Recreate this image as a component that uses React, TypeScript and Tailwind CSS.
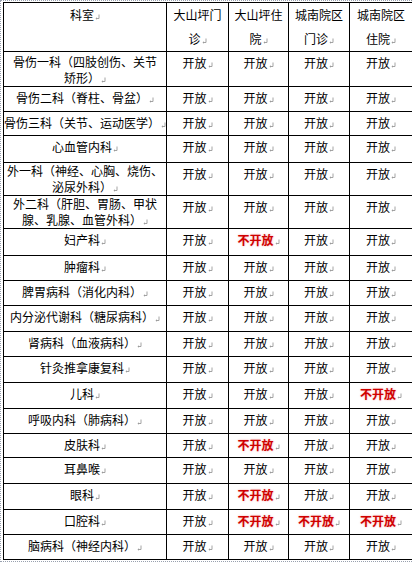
/**
 * App.tsx — 科室开放情况表
 */

type Row = { label: string[]; h: string; open: boolean[]; pad?: string };

const rows: Row[] = [
  { label: ["骨伤一科（四肢创伤、关节", "矫形）"], h: "h-[35px]", pad: "pt-[2px]", open: [true, true, true, true] },
  { label: ["骨伤二科（脊柱、骨盆）"], h: "h-[25px]", open: [true, true, true, true] },
  { label: ["骨伤三科（关节、运动医学）"], h: "h-[24px]", open: [true, true, true, true] },
  { label: ["心血管内科"], h: "h-[27px]", open: [true, true, true, true] },
  { label: ["外一科（神经、心胸、烧伤、", "泌尿外科）"], h: "h-[33px]", pad: "pt-0", open: [true, true, true, true] },
  { label: ["外二科（肝胆、胃肠、甲状", "腺、乳腺、血管外科）"], h: "h-[33px]", pad: "pt-0", open: [true, true, true, true] },
  { label: ["妇产科"], h: "h-[27px]", open: [true, false, true, true] },
  { label: ["肿瘤科"], h: "h-[25px]", open: [true, true, true, true] },
  { label: ["脾胃病科（消化内科）"], h: "h-[25px]", open: [true, true, true, true] },
  { label: ["内分泌代谢科（糖尿病科）"], h: "h-[26px]", open: [true, true, true, true] },
  { label: ["肾病科（血液病科）"], h: "h-[25px]", open: [true, true, true, true] },
  { label: ["针灸推拿康复科"], h: "h-[26px]", open: [true, true, true, true] },
  { label: ["儿科"], h: "h-[26px]", open: [true, true, true, false] },
  { label: ["呼吸内科（肺病科）"], h: "h-[25px]", open: [true, true, true, true] },
  { label: ["皮肤科"], h: "h-[24px]", open: [true, false, true, true] },
  { label: ["耳鼻喉"], h: "h-[26px]", open: [true, true, true, true] },
  { label: ["眼科"], h: "h-[26px]", open: [true, false, true, true] },
  { label: ["口腔科"], h: "h-[25px]", open: [true, false, false, false] },
  { label: ["脑病科（神经内科）"], h: "h-[25px]", open: [true, true, true, true] },
];

const heads = [
  ["大山坪门", "诊"],
  ["大山坪住", "院"],
  ["城南院区", "门诊"],
  ["城南院区", "住院"],
];

// Word paragraph mark
function Mark() {
  return (
    <svg width="5" height="6" viewBox="0 0 5 6" className="inline-block ml-[1px] align-baseline">
      <path d="M4 0.5 V4.5 H1" fill="none" stroke="#9a9a9a" strokeWidth="0.9" />
      <path d="M0.5 4.5 L2 3.3 L2 5.7 Z" fill="#9a9a9a" />
    </svg>
  );
}

const td = "border border-black align-top text-center p-0";

export default function App() {
  return (
    <div className="w-[412px] h-[562px] overflow-hidden bg-white border-t border-l border-b border-dotted border-gray-400 pt-[1px] pl-[2px] font-['Noto_Sans_CJK_SC','Noto_Sans',sans-serif] text-[12px] text-black">
      <table className="w-[409px] table-fixed border-collapse">
        <colgroup>
          <col className="w-[163px]" />
          <col className="w-[62px]" />
          <col className="w-[60px]" />
          <col className="w-[61px]" />
          <col className="w-[63px]" />
        </colgroup>
        <thead>
          <tr className="h-[49px]">
            <th className={`${td} font-normal leading-[24px]`}>
              科室
              <Mark />
            </th>
            {heads.map((h, i) => (
              <th key={i} className={`${td} font-normal leading-[24px]`}>
                {h[0]}
                <br />
                {h[1]}
                <Mark />
              </th>
            ))}
          </tr>
        </thead>
        <tbody>
          {rows.map((r, i) => (
            <tr key={i} className={r.h}>
              <td
                className={`${td} whitespace-nowrap ${
                  r.pad ? `${r.pad} leading-[16px]` : "pt-[3px] leading-[16px]"
                }`}
              >
                {r.label.map((l, j) => (
                  <span key={j}>
                    {j > 0 && <br />}
                    {l}
                  </span>
                ))}
                <Mark />
              </td>
              {r.open.map((o, j) => (
                <td key={j} className={`${td} pt-[3px] leading-[16px]`}>
                  {o ? (
                    <span>开放</span>
                  ) : (
                    <span className="font-bold text-[#d00000] [text-shadow:0_0_2px_rgba(220,0,0,0.35)]">
                      不开放
                    </span>
                  )}
                  <Mark />
                </td>
              ))}
            </tr>
          ))}
        </tbody>
      </table>
    </div>
  );
}
